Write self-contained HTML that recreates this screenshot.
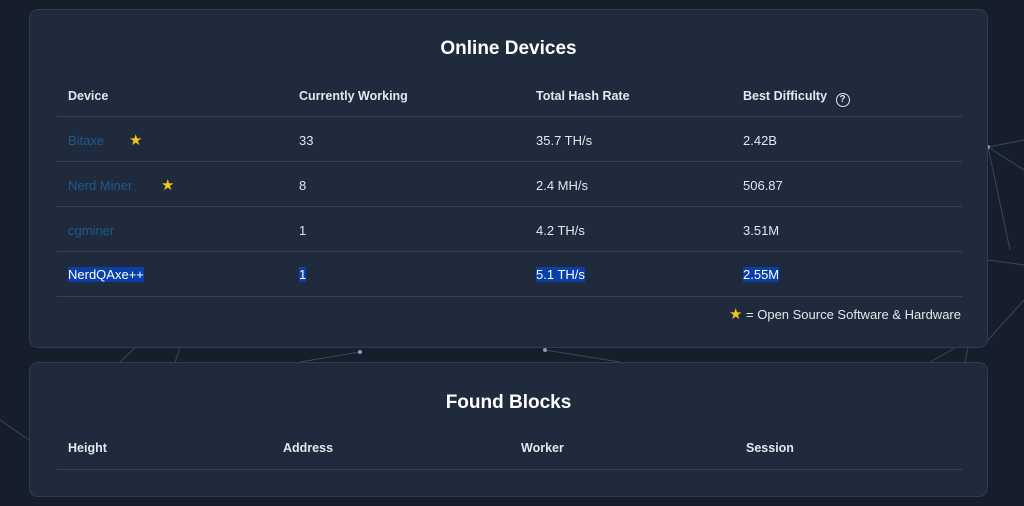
<!DOCTYPE html>
<html><head><style>
*{margin:0;padding:0;box-sizing:border-box}
body{width:1024px;height:506px;background:#161e2b;font-family:"Liberation Sans",sans-serif;color:#e5e7eb;position:relative;overflow:hidden}
.card{position:absolute;left:29px;width:959px;background:#1f2a3d;border:1px solid #2e3b50;border-radius:9px}
h2{position:absolute;left:0;right:0;text-align:center;font-size:19px;font-weight:bold;color:#fff}
.t{position:absolute;font-size:13px;white-space:nowrap}
.h{font-weight:bold;color:#e5e7eb;font-size:12.5px}
.line{position:absolute;left:27px;width:905px;height:1px;background:#34435a}
.link{color:#1e5a8a}
.sel{background:#0b3fa8;color:#fff}
.star{color:#f5c518;font-size:15px}
</style></head><body>
<svg style="position:absolute;left:0;top:0" width="1024" height="506"><g stroke="#3a465a" stroke-width="1" fill="none">
<line x1="988" y1="147" x2="1024" y2="140"/><line x1="988" y1="147" x2="1024" y2="170"/><line x1="988" y1="147" x2="1010" y2="250"/>
<line x1="988" y1="260" x2="1024" y2="265"/><line x1="988" y1="340" x2="1024" y2="300"/>
<line x1="120" y1="362" x2="135" y2="348"/><line x1="175" y1="362" x2="180" y2="348"/><line x1="360" y1="352" x2="300" y2="362"/>
<line x1="545" y1="350" x2="620" y2="362"/><line x1="930" y1="362" x2="955" y2="348"/><line x1="965" y1="362" x2="968" y2="348"/>
<line x1="0" y1="420" x2="29" y2="440"/></g>
<circle cx="988" cy="147" r="2" fill="#8a9ab8"/><circle cx="360" cy="352" r="2" fill="#8a9ab8"/><circle cx="545" cy="350" r="2" fill="#8a9ab8"/></svg>
<div class="card" style="top:9px;height:339px">
<h2 style="top:28px">Online Devices</h2>
<div class="t h" style="left:38px;top:79px">Device</div>
<div class="t h" style="left:269px;top:79px">Currently Working</div>
<div class="t h" style="left:506px;top:79px">Total Hash Rate</div>
<div class="t h" style="left:713px;top:79px">Best Difficulty <span style="display:inline-block;width:14px;height:14px;border:1.5px solid #e5e7eb;border-radius:50%;font-size:10px;text-align:center;line-height:11px;margin-left:5px;vertical-align:-2px">?</span></div>
<div class="line" style="top:106px"></div>
<div class="t link" style="left:38px;top:123px">Bitaxe</div><div class="t star" style="left:99px;top:121px">★</div>
<div class="t" style="left:269px;top:123px">33</div><div class="t" style="left:506px;top:123px">35.7 TH/s</div><div class="t" style="left:713px;top:123px">2.42B</div>
<div class="line" style="top:151px"></div>
<div class="t link" style="left:38px;top:168px">Nerd Miner</div><div class="t star" style="left:131px;top:166px">★</div>
<div class="t" style="left:269px;top:168px">8</div><div class="t" style="left:506px;top:168px">2.4 MH/s</div><div class="t" style="left:713px;top:168px">506.87</div>
<div class="line" style="top:196px"></div>
<div class="t link" style="left:38px;top:213px">cgminer</div>
<div class="t" style="left:269px;top:213px">1</div><div class="t" style="left:506px;top:213px">4.2 TH/s</div><div class="t" style="left:713px;top:213px">3.51M</div>
<div class="line" style="top:241px"></div>
<div class="t sel" style="left:38px;top:257px">NerdQAxe++</div>
<div class="t sel" style="left:269px;top:257px">1</div><div class="t sel" style="left:506px;top:257px">5.1 TH/s</div><div class="t sel" style="left:713px;top:257px">2.55M</div>
<div class="line" style="top:286px"></div>
<div class="t" style="right:26px;top:295px"><span class="star">★</span> = Open Source Software &amp; Hardware</div>
</div>
<div class="card" style="top:362px;height:135px">
<h2 style="top:29px">Found Blocks</h2>
<div class="t h" style="left:38px;top:78px">Height</div>
<div class="t h" style="left:253px;top:78px">Address</div>
<div class="t h" style="left:491px;top:78px">Worker</div>
<div class="t h" style="left:716px;top:78px">Session</div>
<div class="line" style="top:106px"></div>
</div>
</body></html>
